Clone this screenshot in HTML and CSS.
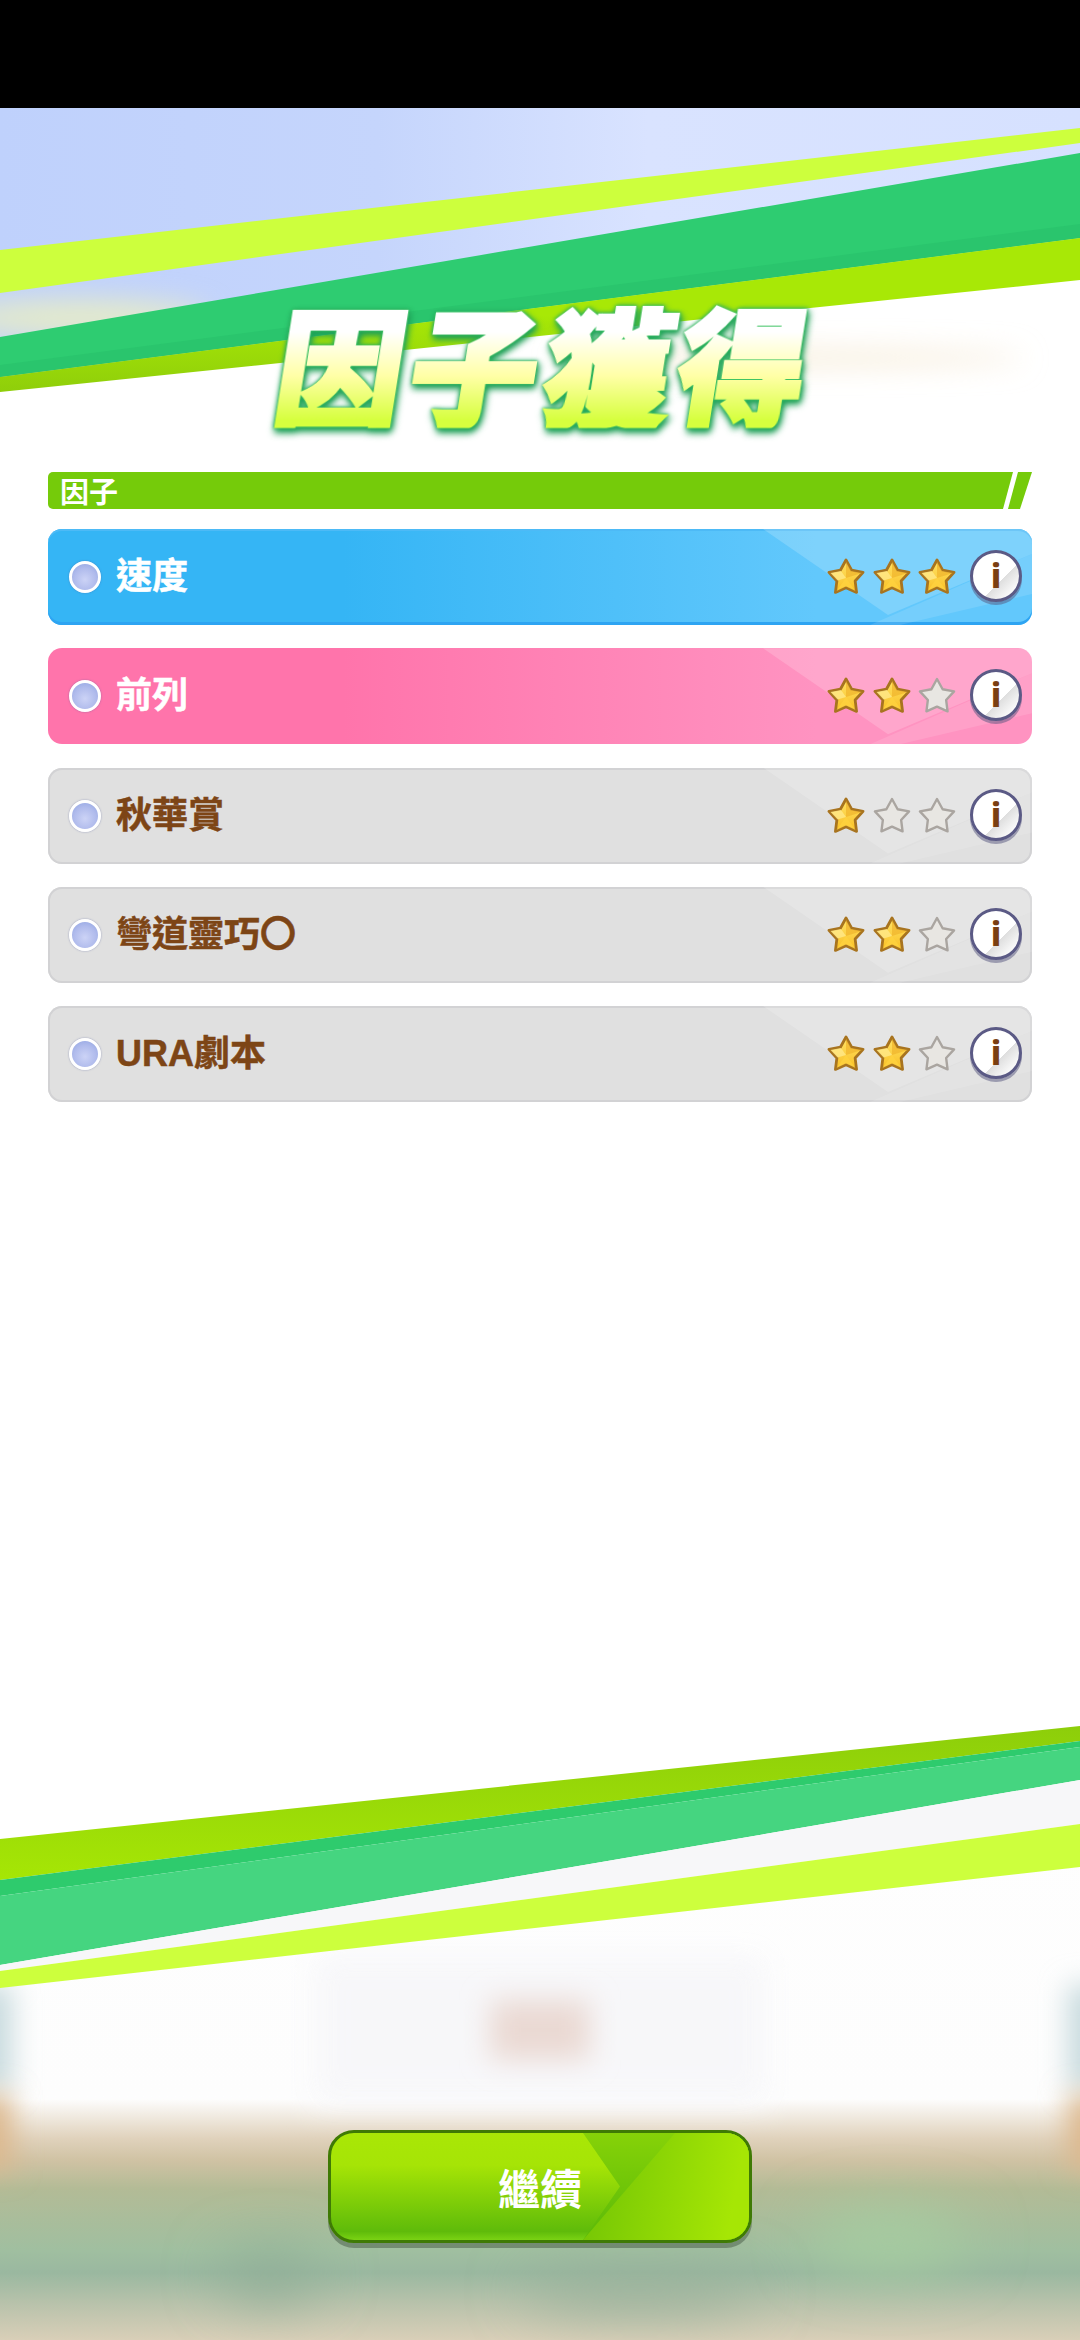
FILE: index.html
```html
<!DOCTYPE html>
<html lang="zh-Hant">
<head>
  <meta charset="UTF-8" />
  <title>因子獲得</title>
  <link rel="stylesheet" href="styles.css">
</head>
<body>

  <svg class="defs" aria-hidden="true">
    <defs>
      <linearGradient id="goldFill" x1="0" y1="0" x2="0" y2="1">
        <stop offset="0" stop-color="#ffe468" />
        <stop offset="1" stop-color="#f9bf24" />
      </linearGradient>
      <symbol id="starOn" viewBox="0 0 40 38">
        <polygon points="20,3 25.64,13.23 37.07,15.33 29.13,23.97 30.57,35.37 20,30.6 9.43,35.37 10.87,23.97 2.93,15.33 14.36,13.23" fill="url(#goldFill)" stroke="#a8741f" stroke-width="2.8" stroke-linejoin="round" />
        <polygon points="20,4.5 25,14 36,16 20,21" fill="#efb42c" opacity=".7" />
        <polygon points="20,21 29.5,34 20,29.6 10.5,34" fill="#ffd23f" opacity=".8" />
        <polygon points="4.5,16 15,14 20,21 11.6,23.6" fill="#ffe98a" opacity=".8" />
      </symbol>
      <symbol id="starOff" viewBox="0 0 40 38">
        <polygon points="20,3 25.64,13.23 37.07,15.33 29.13,23.97 30.57,35.37 20,30.6 9.43,35.37 10.87,23.97 2.93,15.33 14.36,13.23" fill="#e8e6e2" stroke="#aaa5a0" stroke-width="2.4" stroke-linejoin="round" />
      </symbol>
    </defs>
  </svg>

  <div class="status-bar"></div>

  <main class="screen">
    <svg class="backdrop" viewBox="0 108 1080 2232" aria-hidden="true">
      <defs>
        <linearGradient id="sky" x1="0" y1="0" x2="1" y2="0">
          <stop offset="0" stop-color="#bfd1fc" />
          <stop offset=".35" stop-color="#c5d5fc" />
          <stop offset=".6" stop-color="#d9e3ff" />
          <stop offset="1" stop-color="#d6e1ff" />
        </linearGradient>
        <linearGradient id="limeTop" x1="0" y1="1" x2="0" y2="0">
          <stop offset="0" stop-color="#8fce0a" />
          <stop offset=".5" stop-color="#a8e806" />
          <stop offset="1" stop-color="#a8e806" />
        </linearGradient>
        <linearGradient id="limeBottom" x1="0" y1="0" x2="0" y2="1">
          <stop offset="0" stop-color="#8dce0a" />
          <stop offset="1" stop-color="#a6e605" />
        </linearGradient>
        <linearGradient id="blurGround" x1="0" y1="0" x2="0" y2="1">
          <stop offset="0" stop-color="#fefefe" />
          <stop offset=".57" stop-color="#fdfdfd" />
          <stop offset=".64" stop-color="#e0d2bc" />
          <stop offset=".68" stop-color="#cfc2a3" />
          <stop offset=".73" stop-color="#b3bb96" />
          <stop offset=".84" stop-color="#a0bfa0" />
          <stop offset=".88" stop-color="#9ab8a0" />
          <stop offset=".95" stop-color="#c0c5ae" />
          <stop offset="1" stop-color="#d9cfb8" />
        </linearGradient>
        <pattern id="scanlines" width="8" height="7" patternUnits="userSpaceOnUse">
          <rect width="8" height="2" fill="#eeeef3" />
        </pattern>
        <filter id="soft" filterUnits="userSpaceOnUse" x="-100" y="0" width="1280" height="2500">
          <feGaussianBlur stdDeviation="14" />
        </filter>
        <filter id="softer" filterUnits="userSpaceOnUse" x="-100" y="0" width="1280" height="2500">
          <feGaussianBlur stdDeviation="28" />
        </filter>
      </defs>

      <polygon points="0,108 1080,108 1080,240 0,380" fill="url(#sky)" />
      <ellipse cx="80" cy="318" rx="130" ry="18" fill="#e6ecc8" filter="url(#soft)" />
      <polygon points="0,250 1080,128 1080,143 0,293" fill="#cdff3d" />
      <polygon points="0,337 1080,153 1080,238 0,377" fill="#2ecc71" />
      <polygon points="0,365 1080,224 1080,238 0,377" fill="#2ac56d" />
      <polygon points="0,377 1080,238 1080,280 0,392" fill="url(#limeTop)" />
      <ellipse cx="790" cy="358" rx="235" ry="7" fill="#f5e8d0" filter="url(#soft)" />

      <polygon points="0,1965 1080,1780 1080,2340 0,2340" fill="url(#blurGround)" />
      <rect x="310" y="1955" width="460" height="150" fill="#f9f9fb" filter="url(#soft)" />
      <rect x="320" y="1960" width="440" height="140" fill="url(#scanlines)" opacity=".55" filter="url(#soft)" />
      <rect x="490" y="2000" width="100" height="60" fill="#ead9d3" filter="url(#soft)" />
      <rect x="-30" y="1985" width="42" height="105" fill="#c6d9dd" filter="url(#soft)" />
      <rect x="1068" y="1985" width="42" height="105" fill="#c6d9dd" filter="url(#soft)" />
      <rect x="-30" y="2095" width="42" height="75" fill="#dcb78c" filter="url(#soft)" />
      <rect x="1068" y="2095" width="42" height="75" fill="#dcb78c" filter="url(#soft)" />
      <ellipse cx="270" cy="2275" rx="50" ry="22" fill="#8dab94" filter="url(#softer)" />
      <ellipse cx="890" cy="2240" rx="80" ry="30" fill="#a6cda0" filter="url(#softer)" />
      <ellipse cx="640" cy="2290" rx="120" ry="18" fill="#95ae98" filter="url(#softer)" />

      <polygon points="0,1839 1080,1726 1080,1741 0,1880" fill="url(#limeBottom)" />
      <polygon points="0,1880 1080,1741 1080,1747 0,1896" fill="#2ecb6d" />
      <polygon points="0,1896 1080,1747 1080,1780 0,1965" fill="#45d580" />
      <polygon points="0,1965 1080,1780 1080,1824 0,1971" fill="#f7f7f9" />
      <polygon points="0,1971 1080,1824 1080,1867 0,1988" fill="#cdff3d" />
    </svg>

    <h1 class="title">因子獲得</h1>

    <section class="factors">
      <div class="section-bar">
        <div class="section-fill">因子</div>
        <div class="section-slash"></div>
      </div>

      <ul class="factor-list">
        <li class="factor factor-blue">
          <span class="bullet"></span>
          <span class="factor-name">速度</span>
          <span class="stars">
            <svg class="star"><use href="#starOn" /></svg>
            <svg class="star"><use href="#starOn" /></svg>
            <svg class="star"><use href="#starOn" /></svg>
          </span>
          <span class="info-btn">i</span>
        </li>
        <li class="factor factor-pink">
          <span class="bullet"></span>
          <span class="factor-name">前列</span>
          <span class="stars">
            <svg class="star"><use href="#starOn" /></svg>
            <svg class="star"><use href="#starOn" /></svg>
            <svg class="star"><use href="#starOff" /></svg>
          </span>
          <span class="info-btn">i</span>
        </li>
        <li class="factor factor-gray">
          <span class="bullet"></span>
          <span class="factor-name">秋華賞</span>
          <span class="stars">
            <svg class="star"><use href="#starOn" /></svg>
            <svg class="star"><use href="#starOff" /></svg>
            <svg class="star"><use href="#starOff" /></svg>
          </span>
          <span class="info-btn">i</span>
        </li>
        <li class="factor factor-gray">
          <span class="bullet"></span>
          <span class="factor-name">彎道靈巧〇</span>
          <span class="stars">
            <svg class="star"><use href="#starOn" /></svg>
            <svg class="star"><use href="#starOn" /></svg>
            <svg class="star"><use href="#starOff" /></svg>
          </span>
          <span class="info-btn">i</span>
        </li>
        <li class="factor factor-gray">
          <span class="bullet"></span>
          <span class="factor-name">URA劇本</span>
          <span class="stars">
            <svg class="star"><use href="#starOn" /></svg>
            <svg class="star"><use href="#starOn" /></svg>
            <svg class="star"><use href="#starOff" /></svg>
          </span>
          <span class="info-btn">i</span>
        </li>
      </ul>
    </section>

    <button class="next-btn"><span class="next-label">繼續</span></button>
  </main>

</body>
</html>
```

FILE: styles.css
```css
* {
  box-sizing: border-box;
}

body {
  margin: 0;
  width: 1080px;
  height: 2340px;
  overflow: hidden;
  background: #fff;
  font-family: "Noto Sans CJK TC", "Noto Sans", sans-serif;
}

.defs {
  position: absolute;
  width: 0;
  height: 0;
}

.status-bar {
  height: 108px;
  background: #000;
}

.screen {
  position: relative;
  height: 2232px;
  padding: 190px 48px 97px;
  display: flex;
  flex-direction: column;
}

.backdrop {
  position: absolute;
  top: 0;
  left: 0;
  width: 1080px;
  height: 2232px;
}

.title {
  position: relative;
  margin: 0;
  height: 130px;
  line-height: 130px;
  font-size: 128px;
  font-weight: 900;
  letter-spacing: 6px;
  text-align: center;
  white-space: nowrap;
  background: linear-gradient(180deg, #fff 26%, #ffffa6 60%, #d6ff3e 94%);
  -webkit-background-clip: text;
  background-clip: text;
  color: transparent;
  -webkit-text-stroke: 4px transparent;
  transform: translateX(6px) skewX(-9deg);
  filter: drop-shadow(0 0 1px #4ccf66) drop-shadow(0 0 2px #22a85c) drop-shadow(2px 4px 3px #1d9e55);
}

.factors {
  position: relative;
  margin-top: 44px;
}

.section-bar {
  display: flex;
  height: 37px;
}

.section-fill {
  width: 965px;
  padding-left: 12px;
  border-radius: 5px 0 0 5px;
  background: #75cb0a;
  color: #fff;
  font-size: 29px;
  font-weight: 700;
  line-height: 37px;
  clip-path: polygon(0 0, 100% 0, 955px 100%, 0 100%);
}

.section-slash {
  width: 24px;
  margin-left: -5px;
  background: #75cb0a;
  clip-path: polygon(10px 0, 100% 0, 12px 100%, 0 100%);
}

.factor-list {
  list-style: none;
  margin: 20px 0 0;
  padding: 0;
  display: flex;
  flex-direction: column;
  gap: 23.25px;
}

.factor {
  position: relative;
  height: 96px;
  padding: 0 10px 0 21px;
  display: flex;
  align-items: center;
  border-radius: 14px;
  overflow: hidden;
}

.factor::before,
.factor::after {
  content: "";
  position: absolute;
  inset: 0;
}

.factor::before {
  background: rgba(255, 255, 255, 0.18);
  clip-path: polygon(715px 0, 984px 0, 984px 25px, 840px 86px);
}

.factor::after {
  background: rgba(255, 255, 255, 0.12);
  clip-path: polygon(822px 96px, 984px 25px, 984px 65px, 852px 96px);
}

.factor > * {
  position: relative;
  z-index: 1;
}

.factor-blue {
  background: linear-gradient(90deg, #35b5f5 30%, #62c8fc 78%);
  box-shadow: inset 0 2px 0 #4dbaf6, inset 0 -3px 0 #2ea4f2;
  color: #fff;
}

.factor-pink {
  background: linear-gradient(90deg, #ff74ab 30%, #ff93c1 78%);
  color: #fff;
}

.factor-gray {
  background: #e0e0e0;
  box-shadow: inset 0 0 0 2px #d2d2d4;
  color: #7d4516;
}

.bullet {
  flex: none;
  width: 32px;
  height: 32px;
  border: 3px solid #fff;
  border-radius: 50%;
  background: radial-gradient(circle at 50% 60%, #ccd3f6 0, #b0bbec 55%, #8ea2e0 100%);
  box-shadow: 0 0 2px rgba(90, 100, 160, 0.6);
}

.factor-name {
  flex: 1;
  margin-left: 15px;
  font-family: "Liberation Sans", "Noto Sans CJK TC", sans-serif;
  font-size: 36px;
  font-weight: 700;
  line-height: 48px;
  white-space: nowrap;
  -webkit-text-stroke: 0.5px currentColor;
}

.stars {
  display: flex;
  gap: 5.5px;
  margin: -2px 13px 0 0;
}

.star {
  display: block;
  width: 40px;
  height: 38px;
}

.info-btn {
  flex: none;
  width: 52px;
  height: 52px;
  margin-top: -2px;
  border: 3px solid #5b5a85;
  border-radius: 50%;
  background: linear-gradient(135deg, #fff 60%, #dedede 60%, #fbfbfb 86%);
  box-shadow: 0 3px 0 rgba(85, 85, 125, 0.5);
  color: #7a3f12;
  font-family: "Noto Sans", sans-serif;
  font-size: 34px;
  font-weight: 800;
  line-height: 44px;
  text-align: center;
}

.next-btn {
  position: relative;
  width: 424px;
  height: 113px;
  margin: auto auto 0;
  padding: 0;
  overflow: hidden;
  border: 3px solid #3f7a05;
  border-radius: 26px;
  background: linear-gradient(180deg, #a9e706 0, #a6e406 30%, #5fbb0a 92%, #7ad313 100%);
  box-shadow: 0 5px 0 rgba(70, 90, 70, 0.5);
  color: #fff;
  font: inherit;
}

.next-btn::before,
.next-btn::after {
  content: "";
  position: absolute;
  inset: 0;
}

.next-btn::before {
  background: linear-gradient(180deg, #86d208, #5ab908);
  clip-path: polygon(252px 0, 100% 0, 100% 100%, 252px 100%, 289px 50%);
}

.next-btn::after {
  background: linear-gradient(100deg, #66bc05 50%, #a6e605 95%);
  clip-path: polygon(344px 0, 100% 0, 100% 100%, 252px 100%);
}

.next-label {
  position: relative;
  z-index: 1;
  font-size: 42px;
  font-weight: 700;
}
```
